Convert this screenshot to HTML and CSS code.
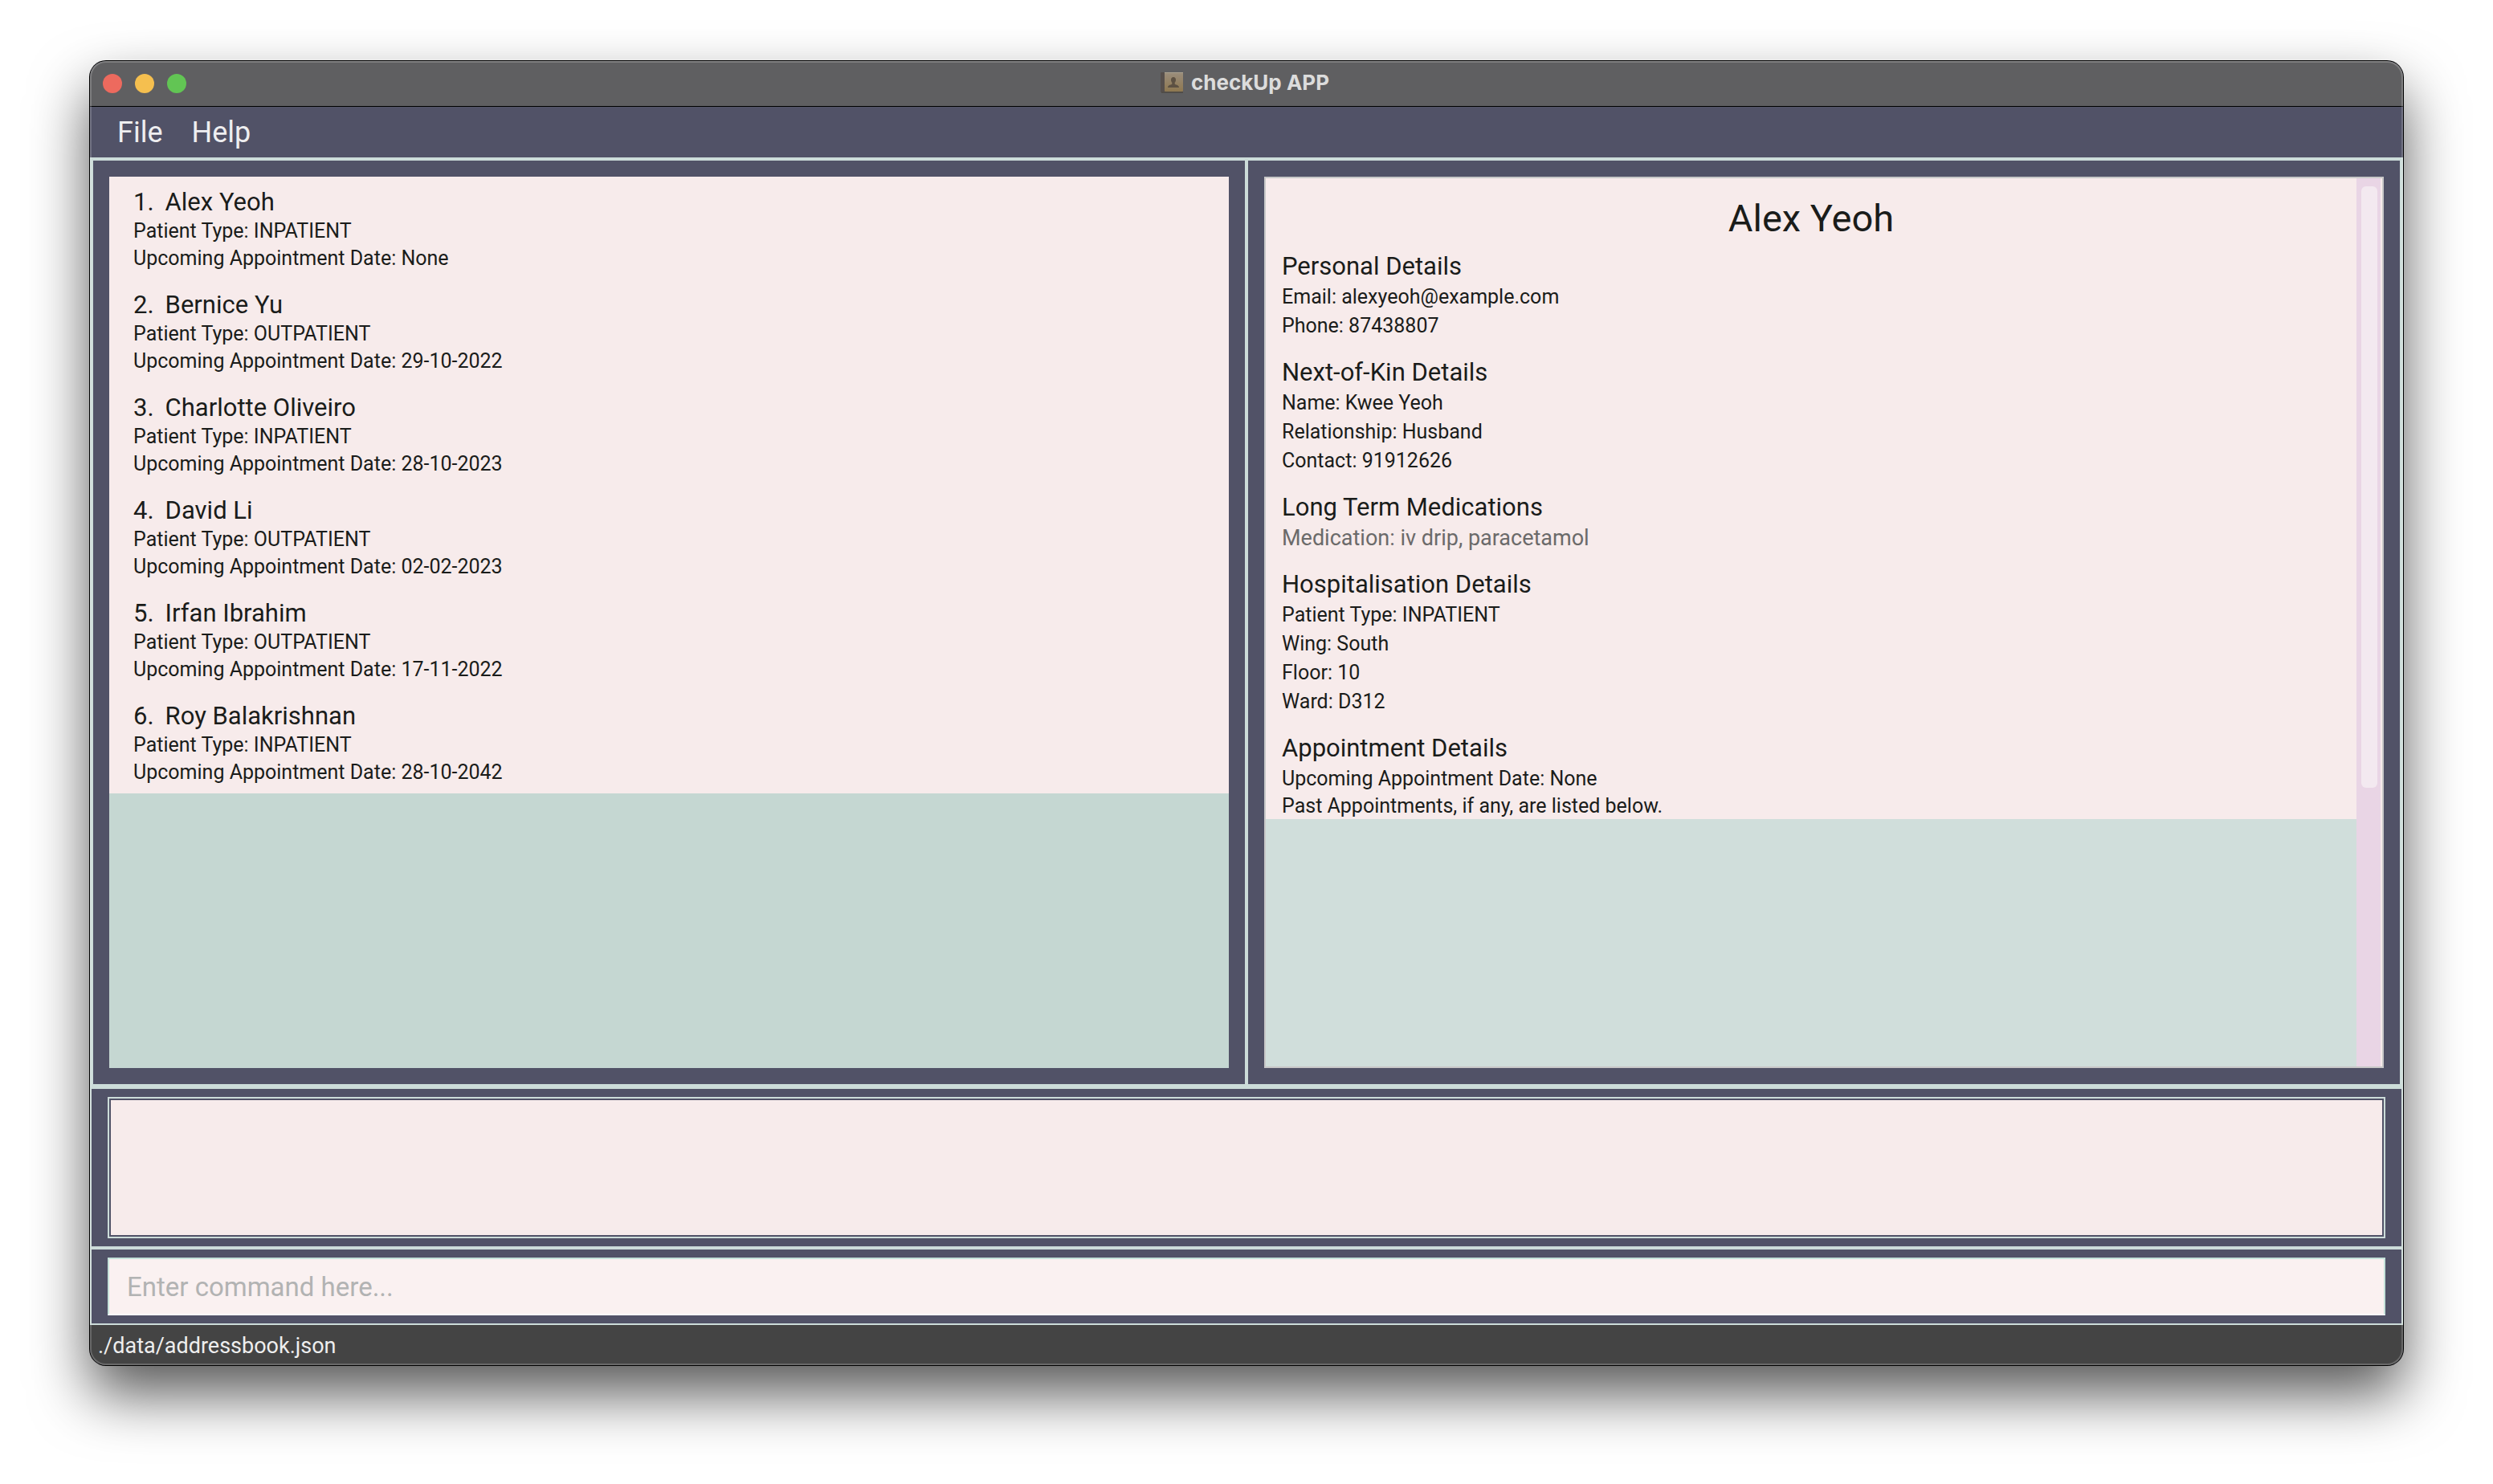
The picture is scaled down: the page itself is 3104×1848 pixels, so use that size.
FILE: index.html
```html
<!DOCTYPE html>
<html lang="en">
<head>
<meta charset="utf-8">
<title>checkUp APP</title>
<link rel="stylesheet" href="styles.css">
</head>
<body>
<div class="window">
  <header class="titlebar">
    <div class="lights">
      <button class="light light-close" aria-label="Close"></button>
      <button class="light light-minimise" aria-label="Minimise"></button>
      <button class="light light-zoom" aria-label="Zoom"></button>
    </div>
    <h1 class="app-title">
      <svg class="app-icon" viewBox="0 0 28 26" aria-hidden="true">
        <defs>
          <linearGradient id="cover" x1="0" y1="0" x2="0" y2="1">
            <stop offset="0" stop-color="#9a8d7c"/>
            <stop offset="1" stop-color="#8f7850"/>
          </linearGradient>
        </defs>
        <rect x="0" y="0" width="6" height="25" rx="1" fill="#564f4c"/>
        <rect x="1" y="24" width="27" height="2" fill="#514d48"/>
        <rect x="5" y="0" width="23" height="24" rx="1" fill="url(#cover)"/>
        <rect x="5" y="0" width="23" height="1" fill="#aaa08f"/>
        <path d="M16 6c2 0 3 1.500 3 3.500c0 1.500-.6 2.600-1.300 3.300v1.700c0 1 5.300 1 5.300 4.500H9c0-3.500 5.300-3.500 5.300-4.500v-1.700C13.600 12.100 13 11 13 9.500C13 7.500 14 6 16 6z" fill="#5d5143"/>
      </svg>
      checkUp APP
    </h1>
  </header>

  <nav class="menubar">
    <button class="menu">File</button>
    <button class="menu">Help</button>
  </nav>

  <main class="split">
    <section class="pane">
      <ol class="patients">
        <li class="patient"><h2 class="name"><span>1.</span><span>Alex Yeoh</span></h2><p>Patient Type: INPATIENT</p><p>Upcoming Appointment Date: None</p></li>
        <li class="patient"><h2 class="name"><span>2.</span><span>Bernice Yu</span></h2><p>Patient Type: OUTPATIENT</p><p>Upcoming Appointment Date: 29-10-2022</p></li>
        <li class="patient"><h2 class="name"><span>3.</span><span>Charlotte Oliveiro</span></h2><p>Patient Type: INPATIENT</p><p>Upcoming Appointment Date: 28-10-2023</p></li>
        <li class="patient"><h2 class="name"><span>4.</span><span>David Li</span></h2><p>Patient Type: OUTPATIENT</p><p>Upcoming Appointment Date: 02-02-2023</p></li>
        <li class="patient"><h2 class="name"><span>5.</span><span>Irfan Ibrahim</span></h2><p>Patient Type: OUTPATIENT</p><p>Upcoming Appointment Date: 17-11-2022</p></li>
        <li class="patient"><h2 class="name"><span>6.</span><span>Roy Balakrishnan</span></h2><p>Patient Type: INPATIENT</p><p>Upcoming Appointment Date: 28-10-2042</p></li>
      </ol>
    </section>

    <section class="pane">
      <div class="details-frame">
        <div class="details-view">
          <article class="details">
            <h2 class="details-title">Alex Yeoh</h2>
            <section class="group">
              <h3>Personal Details</h3>
              <p>Email: alexyeoh@example.com</p>
              <p>Phone: 87438807</p>
            </section>
            <section class="group">
              <h3>Next-of-Kin Details</h3>
              <p>Name: Kwee Yeoh</p>
              <p>Relationship: Husband</p>
              <p>Contact: 91912626</p>
            </section>
            <section class="group">
              <h3>Long Term Medications</h3>
              <p class="medication">Medication: iv drip, paracetamol</p>
            </section>
            <section class="group">
              <h3>Hospitalisation Details</h3>
              <p>Patient Type: INPATIENT</p>
              <p>Wing: South</p>
              <p>Floor: 10</p>
              <p>Ward: D312</p>
            </section>
            <section class="group">
              <h3>Appointment Details</h3>
              <p>Upcoming Appointment Date: None</p>
              <p class="note">Past Appointments, if any, are listed below.</p>
            </section>
          </article>
        </div>
        <div class="scroll-track"><div class="scroll-thumb"></div></div>
      </div>
    </section>
  </main>

  <section class="bar">
    <textarea class="result" readonly aria-label="Result"></textarea>
  </section>
  <form class="bar">
    <input class="command" type="text" placeholder="Enter command here..." aria-label="Command">
  </form>
  <footer class="status">./data/addressbook.json</footer>
</div>
</body>
</html>
```
FILE: styles.css
```css
:root {
  --navy: #515267;
  --mint: #ccdcd9;
  --pink: #f7ebeb;
  --ink: #1a1c1a;
}

* { box-sizing: border-box; }

h1, h2, h3, p, ol { margin: 0; padding: 0; font-weight: 400; }

button, input, textarea { font: inherit; margin: 0; }

body {
  margin: 0;
  min-height: 100vh;
  padding: 76px 112px 148px;
  display: flex;
  background: #fff;
  color: var(--ink);
  font-family: Roboto, "Liberation Sans", sans-serif;
  font-size: 25px;
}

.window {
  position: relative;
  flex: 1;
  min-width: 0;
  display: flex;
  flex-direction: column;
  border-radius: 20px;
  overflow: hidden;
  background: var(--navy);
  box-shadow: 0 0 0 1px #000, 0 36px 72px rgba(0, 0, 0, .66);
}

/* light rim along the inside of the window edge */
.window::after {
  content: "";
  position: absolute;
  inset: 0;
  border-radius: 20px;
  box-shadow: inset 0 0 0 2px rgba(255, 255, 255, .2);
  pointer-events: none;
}

.titlebar {
  display: grid;
  grid-template-columns: 1fr auto 1fr;
  align-items: center;
  height: 57px;
  padding: 0 16px;
  background: #5f5f61;
  border-bottom: 1px solid #000;
}

.lights { display: flex; gap: 16px; }

.light {
  width: 24px;
  height: 24px;
  padding: 0;
  border: 0;
  border-radius: 50%;
}

.light-close { background: #ed6a5e; }
.light-minimise { background: #f5bf4f; }
.light-zoom { background: #62c554; }

.app-title {
  display: flex;
  align-items: center;
  gap: 10px;
  padding: 0 4px 2px 0;
  color: #dcdcdc;
  font: 700 26px/32px Inter, sans-serif;
}

.app-icon { width: 28px; height: 26px; }

.menubar {
  display: flex;
  height: 63px;
  padding: 0 16px;
}

.menu {
  padding: 0 18px;
  border: 0;
  background: none;
  color: #eeeef0;
  font-size: 36px;
}

.split {
  flex: 1;
  display: grid;
  grid-template-columns: 1fr 1fr;
  gap: 4px;
  border: 4px solid var(--mint);
  background: var(--mint);
}

.pane {
  display: flex;
  padding: 20px;
  background: var(--navy);
}

.patients {
  flex: 1;
  list-style: none;
  background: #c5d7d2;
}

.patient {
  padding: 13px 30px 9px;
  background: var(--pink);
  line-height: 34px;
}

.name {
  display: flex;
  gap: 14px;
  font-size: 31px;
  line-height: 38px;
}

.details-frame {
  flex: 1;
  display: flex;
  padding-right: 2px;
  border: 2px solid #c8c8c8;
  background: var(--pink);
}

.details-view { flex: 1; background: #d0dedb; }

.details {
  padding: 22px 20px 0;
  background: var(--pink);
  line-height: 36px;
}

.details-title {
  margin-bottom: 12px;
  text-align: center;
  font-size: 47px;
  line-height: 56px;
}

.group + .group { margin-top: 20px; }

.group h3 { font-size: 31px; line-height: 40px; }

.medication { color: #6b6a6a; font-size: 27px; }

.note { line-height: 32px; }

.scroll-track {
  width: 30px;
  padding: 10px 4px 10px 6px;
  background: #e9d5e5;
}

.scroll-thumb {
  height: 69%;
  border-radius: 6px;
  background: #f3e9f0;
}

.bar {
  display: flex;
  padding: 10px 20px;
  border: 2px solid var(--mint);
}

.result {
  flex: 1;
  height: 176px;
  padding: 0;
  border: 2px solid var(--mint);
  outline: 2px solid var(--navy);
  outline-offset: -4px;
  background: var(--pink);
  resize: none;
}

.command {
  flex: 1;
  min-width: 0;
  height: 72px;
  padding: 0 22px;
  border: solid;
  border-width: 2px;
  border-color: #c5e2da #c5e2da #fff;
  border-radius: 0;
  background: #faf1f1;
  font-size: 33px;
}

.command::placeholder { color: #b2b3b3; opacity: 1; }

.status {
  padding: 2px 10px 0;
  background: #444;
  color: #eee;
  font-size: 27px;
  line-height: 48px;
}
```
